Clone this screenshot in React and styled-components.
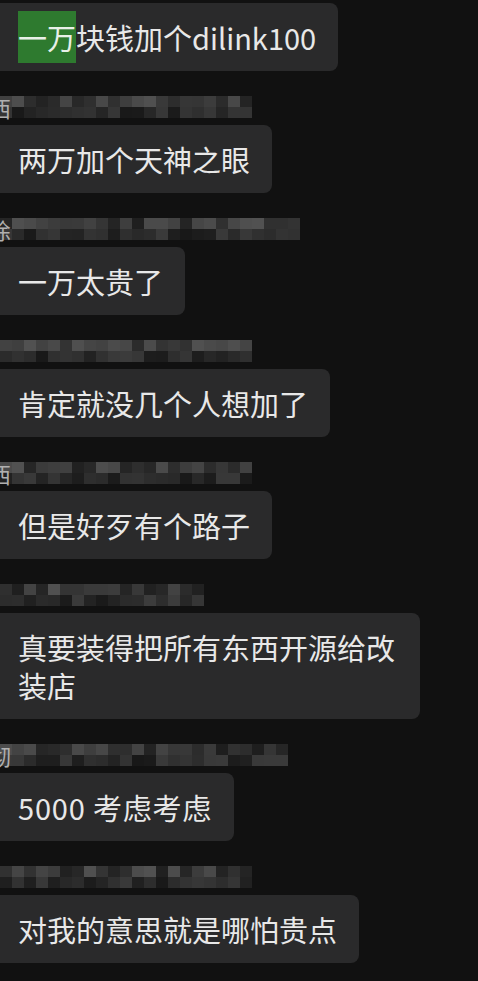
import React from "react";
import styled, { createGlobalStyle } from "styled-components";

const GlobalStyle = createGlobalStyle`
  html, body {
    margin: 0;
    padding: 0;
    background: #111111;
  }
  body {
    overflow-x: hidden;
    font-family: "Noto Sans CJK SC", "Noto Sans", sans-serif;
  }
`;

const messages = [
  { text: "一万块钱加个dilink100", mark: 2, name: null },
  { text: "两万加个天神之眼", name: { width: 252, seed: 11, glyph: "西" } },
  { text: "一万太贵了", name: { width: 300, seed: 23, glyph: "徐" } },
  { text: "肯定就没几个人想加了", name: { width: 252, seed: 37, glyph: "" } },
  { text: "但是好歹有个路子", name: { width: 252, seed: 41, glyph: "西" } },
  { text: "真要装得把所有东西开源给改装店", name: { width: 206, seed: 53, glyph: "" } },
  { text: "5000 考虑考虑", wide: true, name: { width: 288, seed: 67, glyph: "彻" } },
  { text: "对我的意思就是哪怕贵点", name: { width: 252, seed: 79, glyph: "" } },
];

const seeded = (start) => {
  let s = start;
  return () => {
    s = (s * 9301 + 49297) % 233280;
    return s / 233280;
  };
};

const Name = ({ width, seed, glyph }) => {
  const rand = seeded(seed);
  const cols = Math.floor(width / 12);
  const cells = [];
  for (let r = 0; r < 2; r++) {
    for (let c = 0; c < cols; c++) {
      const v = Math.round((r === 0 ? 30 : 24) + rand() * (r === 0 ? 52 : 36));
      cells.push(`rgb(${v},${v},${v})`);
    }
  }
  return (
    <NameRow>
      {glyph && <Glyph>{glyph}</Glyph>}
      <Mosaic style={{ gridTemplateColumns: `repeat(${cols}, 12px)` }}>
        {cells.map((c, i) => (
          <Cell key={i} style={{ background: c }} />
        ))}
      </Mosaic>
    </NameRow>
  );
};

const App = () => (
  <>
    <GlobalStyle />
    <Page>
      {messages.map((m, i) => (
        <Message key={i}>
          {m.name && <Name {...m.name} />}
          <Bubble $wide={m.wide}>
            {m.mark ? (
              <>
                <Mark>{m.text.slice(0, m.mark)}</Mark>
                {m.text.slice(m.mark)}
              </>
            ) : (
              m.text
            )}
          </Bubble>
        </Message>
      ))}
    </Page>
  </>
);

const Page = styled.div`
  display: flex;
  flex-direction: column;
  align-items: flex-start;
  gap: 25px;
  padding: 3px 0 16px;
  width: 478px;
  min-height: 981px;
  box-sizing: border-box;
  background: #111111;
  overflow: hidden;
`;

const Message = styled.div`
  display: flex;
  flex-direction: column;
  align-items: flex-start;
  gap: 7px;
`;

const NameRow = styled.div`
  position: relative;
  height: 22px;
  display: flex;
  align-items: center;
`;

const Glyph = styled.span`
  position: absolute;
  left: -11px;
  top: 0;
  font-size: 22px;
  line-height: 22px;
  color: #b0b0b0;
  z-index: 1;
`;

const Mosaic = styled.div`
  display: grid;
  grid-template-rows: 11px 11px;
  filter: blur(0.6px);
`;

const Cell = styled.div`
  width: 12px;
  height: 11px;
`;

const Bubble = styled.div`
  margin-left: -10px;
  padding: 15px 22px 15px 28px;
  max-width: 380px;
  background: #2a2a2b;
  border-radius: 8px;
  color: #e8e8e8;
  font-size: 29px;
  line-height: 38px;
  letter-spacing: ${(p) => (p.$wide ? "0.8px" : "0")};
  word-break: break-all;
`;

const Mark = styled.span`
  background: #2e7a2f;
  color: #e8f0e8;
  padding: 5px 0;
`;

export default App;
